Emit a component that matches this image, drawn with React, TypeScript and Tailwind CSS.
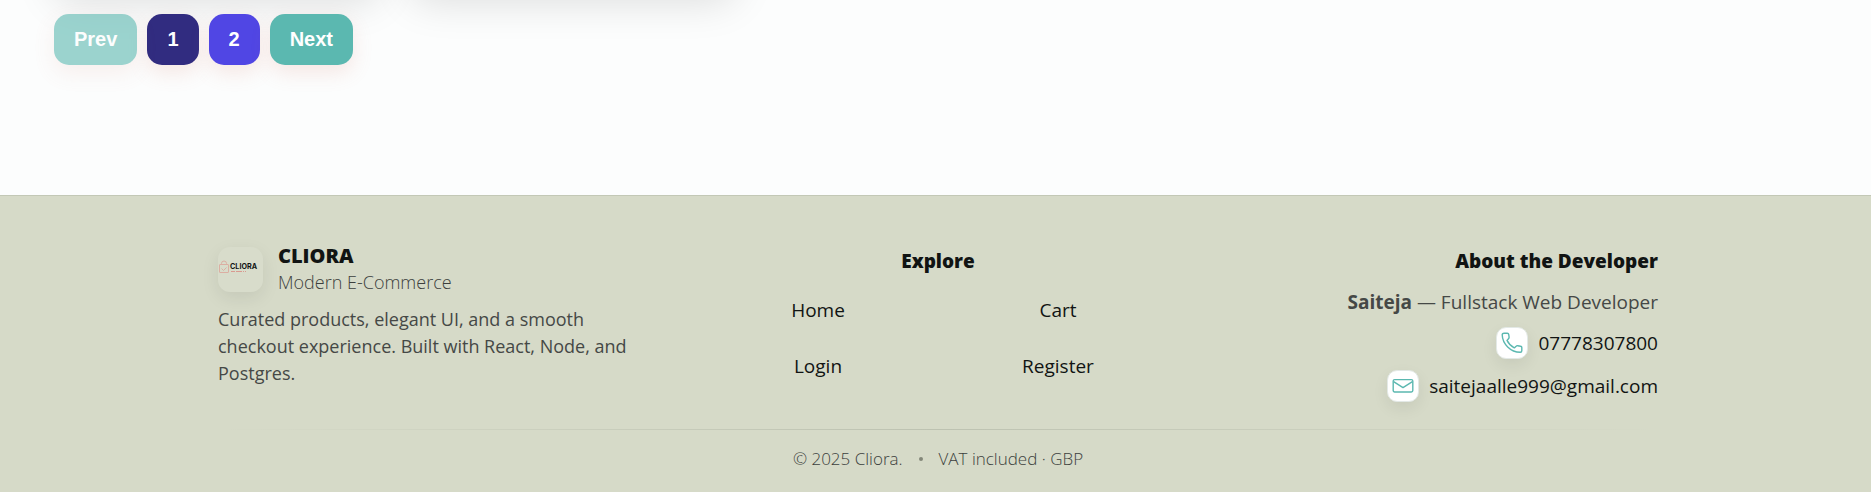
import React from "react";

const linkClass = "text-[19px] leading-[27px] text-[#111413]";
const pageButton =
  "rounded-[15px] px-5 py-3.5 text-[20px] leading-[23px] font-bold text-white shadow-[0_8px_20px_rgba(214,120,100,0.16)]";
const cardClass =
  "h-[300px] w-[326px] rounded-[20px] bg-white shadow-[0_10px_40px_rgba(0,0,0,0.13)]";
const iconBox =
  "flex size-8 items-center justify-center rounded-[10px] border border-[#e3e9e6] bg-white text-[#5bb8b0] shadow-[0_6px_16px_rgba(0,0,0,0.07)]";

function Logo() {
  return (
    <span className="size-[45px] shrink-0 overflow-hidden rounded-[12px] bg-[#d8dccb] shadow-[0_6px_18px_rgba(0,0,0,0.08)]">
      <svg viewBox="0 0 45 45" className="size-full" role="img" aria-label="Cliora logo">
        <g fill="none" stroke="#dcaea2" strokeWidth="1">
          <rect x="1.5" y="17.5" width="9" height="8" rx="0.5" />
          <path d="M3.5 17.5v-1a2.5 2.5 0 0 1 5 0v1" />
          <path d="M3.5 21.5l2 2 3-3" />
          <path d="M13 24.5h4M18 24.5h6M25 24.5h1M27 24.5h1" stroke="#d99a90" />
        </g>
        <text x="12" y="22" fontSize="7.2" fontWeight="700" fill="#111413" fontFamily="Inter, sans-serif">
          CLIORA
        </text>
      </svg>
    </span>
  );
}

function PhoneIcon() {
  return (
    <svg viewBox="0 0 22 22" className="size-[22px]" fill="none" stroke="currentColor" strokeWidth="1.4" strokeLinejoin="round" aria-hidden="true">
      <path d="M3 1.2h3.3c.8 0 1.3.4 1.4 1.1l.4 2.7c.1.7-.1 1.2-.6 1.7L6 8.4c1.5 3.1 4 5.8 7.3 7.5l1.8-1.7c.5-.5 1-.6 1.6-.5l2.9.6c.8.1 1.2.6 1.2 1.3v3.2c0 .9-.6 1.5-1.5 1.5C9.5 20.3 1.5 12 1.2 2.8 1.2 1.8 2 1.2 3 1.2z" />
    </svg>
  );
}

function MailIcon() {
  return (
    <svg viewBox="0 0 22 22" className="size-[22px]" fill="none" stroke="currentColor" strokeWidth="1.4" strokeLinejoin="round" aria-hidden="true">
      <rect x="1.2" y="4.6" width="19.6" height="12.4" rx="1.4" />
      <path d="M1.6 6.6l9.4 6 9.4-6" />
    </svg>
  );
}

export default function App() {
  return (
    <div className="overflow-hidden bg-[#fcfdfd] font-['Open_Sans','Noto_Sans',sans-serif]">
      <main className="px-[54px] pb-[130px]">
        <div className="-mt-[308px] flex gap-[30px]" aria-hidden="true">
          <div className={cardClass} />
          <div className={cardClass} />
        </div>
        <nav aria-label="Pagination" className="relative mt-[22px] flex gap-2.5 font-['Liberation_Sans',Arial,sans-serif]">
          <button type="button" disabled className={`${pageButton} bg-[#5bb8b0] opacity-60`}>Prev</button>
          <button type="button" aria-current="page" className={`${pageButton} bg-[#312c80]`}>1</button>
          <button type="button" className={`${pageButton} bg-[#5046e4]`}>2</button>
          <button type="button" className={`${pageButton} bg-[#5bb8b0]`}>Next</button>
        </nav>
      </main>

      <footer className="border-t border-[#c3c8b6] bg-[#d6dac8] pb-5 pl-[5px]">
        <div className="mx-auto max-w-[1440px]">
          <div className="grid grid-cols-3">
            <section className="pt-[46px]">
              <div className="flex items-center gap-[15px]">
                <Logo />
                <div className="leading-[27px]">
                  <p className="text-[20px] font-extrabold text-[#111413]">CLIORA</p>
                  <p className="text-[18px] font-light text-[#3c3f3d]">Modern E-Commerce</p>
                </div>
              </div>
              <p className="mt-2.5 max-w-[425px] text-[18px] leading-[27px] text-[#454846]">
                Curated products, elegant UI, and a smooth checkout experience. Built with React, Node, and Postgres.
              </p>
            </section>

            <nav aria-label="Explore" className="pt-[52px] text-center">
              <h2 className="text-[19px] leading-[27px] font-extrabold text-[#111413]">Explore</h2>
              <div className="mt-[22px] grid grid-cols-2 gap-y-[29px]">
                <a href="#home" className={linkClass}>Home</a>
                <a href="#cart" className={linkClass}>Cart</a>
                <a href="#login" className={linkClass}>Login</a>
                <a href="#register" className={linkClass}>Register</a>
              </div>
            </nav>

            <section className="flex flex-col items-end pt-[52px] text-right">
              <h2 className="text-[19px] leading-[27px] font-extrabold text-[#111413]">About the Developer</h2>
              <p className="mt-3.5 text-[19px] leading-[27px] text-[#454846]">
                <strong>Saiteja</strong> — Fullstack Web Developer
              </p>
              <a href="tel:07778307800" className="mt-[11px] flex items-center gap-2.5">
                <span className={iconBox}><PhoneIcon /></span>
                <span className={linkClass}>07778307800</span>
              </a>
              <a href="mailto:saitejaalle999@gmail.com" className="mt-[11px] flex items-center gap-2.5">
                <span className={iconBox}><MailIcon /></span>
                <span className={linkClass}>saitejaalle999@gmail.com</span>
              </a>
            </section>
          </div>

          <div className="mt-[27px] h-px bg-linear-to-r from-transparent via-[#bdc2b1] to-transparent" />
          <div className="mt-[15px] flex items-center justify-center gap-4 text-[17px] leading-[27px] font-light text-[#3c3f3d]">
            <span>© 2025 Cliora.</span>
            <span className="size-1 rounded-full bg-[#838779]" />
            <span>VAT included · GBP</span>
          </div>
        </div>
      </footer>
    </div>
  );
}
